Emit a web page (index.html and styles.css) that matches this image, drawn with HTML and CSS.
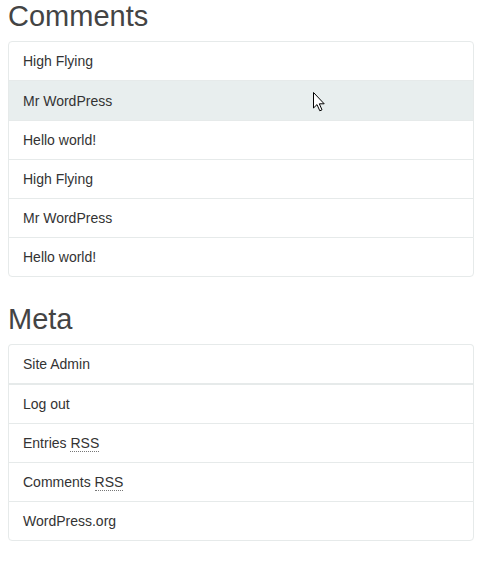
FILE: index.html
```html
<!DOCTYPE html>
<html>
<head>
<meta charset="utf-8">
<link rel="stylesheet" href="styles.css">
</head>
<body>
<section class="widget">
  <h2 class="widget-title">Comments</h2>
  <ul class="list">
    <li class="item">High Flying</li>
    <li class="item hover">Mr WordPress</li>
    <li class="item">Hello world!</li>
    <li class="item">High Flying</li>
    <li class="item">Mr WordPress</li>
    <li class="item">Hello world!</li>
  </ul>
</section>
<section class="widget">
  <h2 class="widget-title">Meta</h2>
  <ul class="list">
    <li class="item first">Site Admin</li>
    <li class="item">Log out</li>
    <li class="item">Entries <abbr class="abbr" title="Really Simple Syndication">RSS</abbr></li>
    <li class="item">Comments <abbr class="abbr" title="Really Simple Syndication">RSS</abbr></li>
    <li class="item">WordPress.org</li>
  </ul>
</section>
<svg class="cursor" width="13" height="20" viewBox="0 0 13 20">
  <path d="M0.5 0.5 L0.5 16 L4 12.6 L6.8 18.8 L9 17.8 L6.3 11.8 L11.2 11.8 Z" fill="#fff" stroke="#000" stroke-width="1"/>
</svg>
</body>
</html>
```
FILE: styles.css
```css
html, body {
  margin: 0;
  padding: 0;
  background: #fff;
}
body {
  padding: 0 13px 0 8px;
  font-family: "Liberation Sans", Arial, sans-serif;
  color: #333;
  position: relative;
}
.widget {
  margin-bottom: 26px;
}
.widget-title {
  margin: 0 0 8px;
  font-size: 29px;
  line-height: 33px;
  font-weight: normal;
  color: #444;
}
.list {
  list-style: none;
  margin: 0;
  padding: 0;
}
.item {
  font-size: 14px;
  line-height: 18px;
  padding: 10px 14px;
  border: 1px solid #e6eaea;
  margin-bottom: -1px;
  background: #fff;
}
.item:first-child {
  border-top-left-radius: 4px;
  border-top-right-radius: 4px;
}
.item:last-child {
  border-bottom-left-radius: 4px;
  border-bottom-right-radius: 4px;
  margin-bottom: 0;
}
.item.hover {
  background: #e8eeee;
  padding-top: 11px;
}
.item.first {
  border-bottom-width: 2px;
}
.abbr {
  text-decoration: none;
  border-bottom: 1px dotted #777;
}
.cursor {
  position: absolute;
  left: 313px;
  top: 92px;
}
```
